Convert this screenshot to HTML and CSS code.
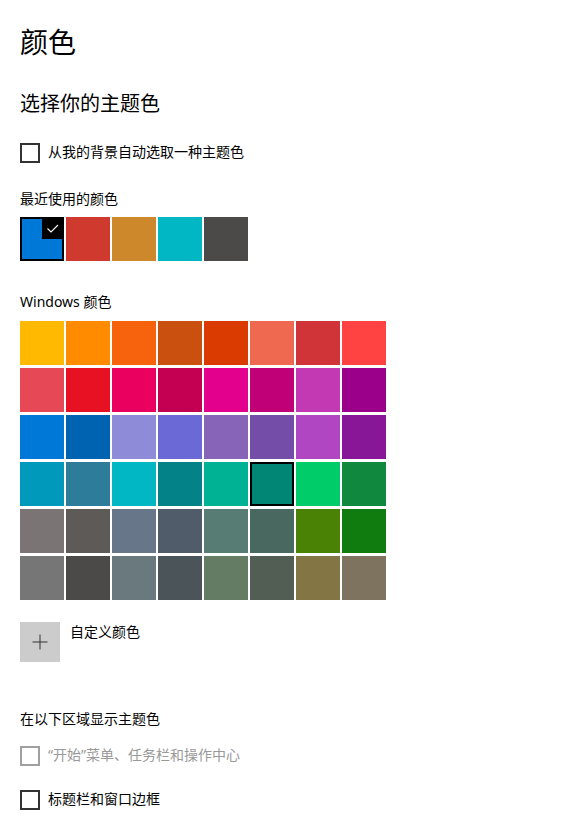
FILE: index.html
```html
<!DOCTYPE html>
<html lang="zh-CN">
<head>
  <meta charset="UTF-8">
  <title>颜色</title>
  <link rel="stylesheet" href="styles.css">
</head>
<body>
  <div class="page">
    <h1 class="title">颜色</h1>
    <h2 class="subtitle">选择你的主题色</h2>

    <label class="check check_auto">
      <span class="box"></span>
      <span class="check_text">从我的背景自动选取一种主题色</span>
    </label>

    <div class="label label_recent">最近使用的颜色</div>
    <div class="recent">
      <div class="swatch selected" style="background:#0078d7">
        <span class="tick">
          <svg width="22" height="22" viewBox="0 0 22 22"><polyline points="5.5,11.5 9,15 16,8" fill="none" stroke="#fff" stroke-width="1.1"/></svg>
        </span>
      </div>
      <div class="swatch" style="background:#d0392e"></div>
      <div class="swatch" style="background:#cc882b"></div>
      <div class="swatch" style="background:#00b7c3"></div>
      <div class="swatch" style="background:#4c4a48"></div>
    </div>

    <div class="label label_windows">Windows 颜色</div>
    <div class="grid" id="grid"></div>

    <div class="custom">
      <div class="plus">
        <svg width="40" height="40" viewBox="0 0 40 40"><path d="M20 12.5v15M12.5 20h15" stroke="#333" stroke-width="1"/></svg>
      </div>
      <div class="custom_text">自定义颜色</div>
    </div>

    <div class="label label_show">在以下区域显示主题色</div>
    <label class="check check_start disabled">
      <span class="box"></span>
      <span class="check_text">“开始”菜单、任务栏和操作中心</span>
    </label>
    <label class="check check_title">
      <span class="box"></span>
      <span class="check_text">标题栏和窗口边框</span>
    </label>
  </div>

  <script>
    const colors = [
      '#ffb900', '#ff8c00', '#f7630c', '#ca5010', '#da3b01', '#ef6950', '#d13438', '#ff4343',
      '#e74856', '#e81123', '#ea005e', '#c30052', '#e3008c', '#bf0077', '#c239b3', '#9a0089',
      '#0078d7', '#0063b1', '#8e8cd8', '#6b69d6', '#8764b8', '#744da9', '#b146c2', '#881798',
      '#0099bc', '#2d7d9a', '#00b7c3', '#038387', '#00b294', '#018574', '#00cc6a', '#10893e',
      '#7a7574', '#5d5a58', '#68768a', '#515c6b', '#567c73', '#486860', '#498205', '#107c10',
      '#767676', '#4c4a48', '#69797e', '#4a5459', '#647c64', '#525e54', '#847545', '#7e735f'
    ];
    const grid = document.getElementById('grid');
    colors.forEach((c, i) => {
      const tile = document.createElement('div');
      tile.className = 'swatch' + (i === 29 ? ' outlined' : '');
      tile.style.background = c;
      grid.appendChild(tile);
    });
  </script>
</body>
</html>
```

FILE: styles.css
```css
body {
  margin: 0;
  background: #fff;
  color: #000;
  font-family: "Segoe UI", "Noto Sans", "Noto Sans CJK SC", sans-serif;
}
.page {
  padding: 22px 20px 0 20px;
}
.title {
  margin: 0;
  font-size: 28px;
  font-weight: normal;
  line-height: 40px;
}
.subtitle {
  margin: 28px 0 0 0;
  font-size: 20px;
  font-weight: normal;
  line-height: 28px;
}
.label {
  font-size: 14px;
  line-height: 20px;
}
.label_recent {
  margin-top: 26px;
}
.label_windows {
  margin-top: 31px;
}
.label_show {
  margin-top: 47px;
}

/* checkboxes */
.check {
  display: flex;
  align-items: center;
  gap: 8px;
  height: 20px;
  font-size: 14px;
  line-height: 18px;
}
.box {
  width: 20px;
  height: 20px;
  box-sizing: border-box;
  border: 2px solid #333;
}
.check_text {
  margin-top: -2px;
}
.check_auto {
  margin-top: 25px;
}
.check_start {
  margin-top: 17px;
}
.check_title {
  margin-top: 24px;
}
.disabled {
  color: #999;
}
.disabled .box {
  border-color: #a0a0a0;
}

/* swatches */
.recent {
  display: flex;
  gap: 2px;
  margin-top: 8px;
}
.swatch {
  width: 44px;
  height: 44px;
  box-sizing: border-box;
  position: relative;
}
.selected {
  border: 2px solid #000;
}
.tick {
  position: absolute;
  top: -2px;
  right: -2px;
  width: 22px;
  height: 22px;
  background: #000;
}
.tick svg {
  display: block;
}
.grid {
  display: grid;
  grid-template-columns: repeat(8, 44px);
  grid-auto-rows: 44px;
  column-gap: 2px;
  row-gap: 3px;
  margin-top: 9px;
}
.outlined {
  border: 2px solid #000;
}

/* custom colour */
.custom {
  display: flex;
  gap: 10px;
  margin-top: 22px;
}
.plus {
  width: 40px;
  height: 40px;
  background: #cccccc;
}
.plus svg {
  display: block;
}
.custom_text {
  font-size: 14px;
  line-height: 20px;
}
```
